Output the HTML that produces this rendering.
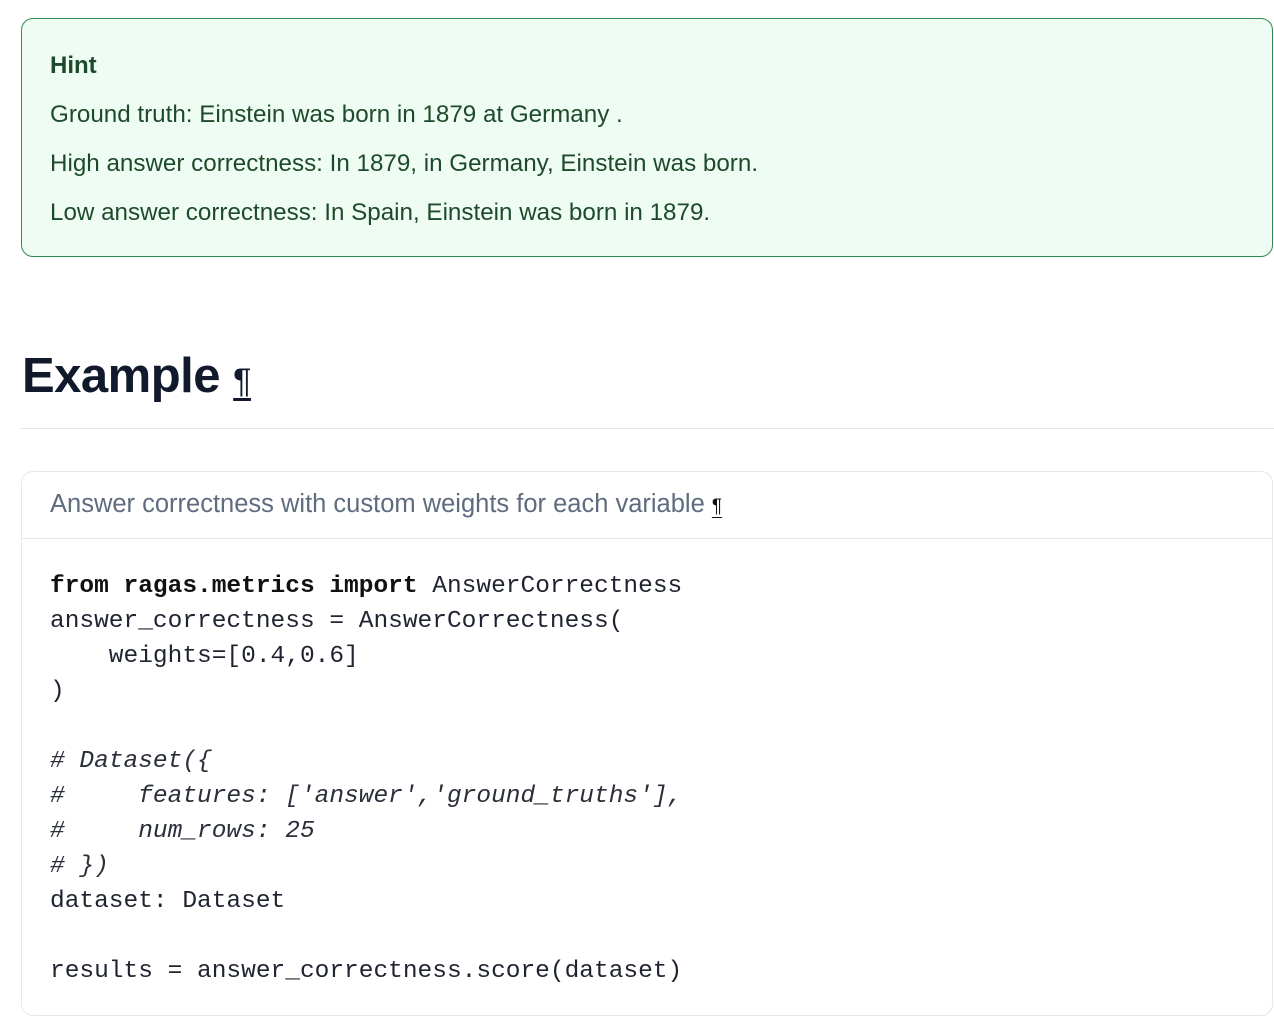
<!DOCTYPE html>
<html><head><style>
body{margin:0;background:#fff;width:1274px;height:1022px;overflow:hidden;font-family:"Liberation Sans",sans-serif}
.hint{position:absolute;left:21px;top:18px;width:1250px;height:237px;border:1px solid #2e8b4f;border-radius:12px;background:#effcf3;color:#1d4a2c}
.hint div{position:absolute;left:28px;font-size:24.2px;white-space:nowrap}
h1{position:absolute;left:22px;top:348px;margin:0;font-size:49px;font-weight:700;color:#111a2c;letter-spacing:-0.5px}
h1 span{font-size:34px;text-decoration:underline;text-underline-offset:6px;font-weight:400}
.rule{position:absolute;left:21px;top:428px;width:1253px;height:1px;background:#e5e7eb}
.code{position:absolute;left:21px;top:471px;width:1250px;height:543px;border:1px solid #e5e7eb;border-radius:12px}
.cap{position:absolute;left:28px;top:18px;font-size:25.5px;color:#5f6b7e;white-space:nowrap}
.cap span{font-size:19px;color:#111;text-decoration:underline;text-underline-offset:5px}
.sep{position:absolute;left:0;top:66px;width:100%;height:1px;background:#e5e7eb}
pre{position:absolute;left:28px;top:97px;margin:0;font-family:"Liberation Mono",monospace;font-size:24.5px;line-height:35px;color:#1f2430}
b{font-weight:700;color:#111}
i{color:#2a2f3a}
</style></head><body>
<div class="hint">
<div style="top:33px;font-weight:700;font-size:24px">Hint</div>
<div style="top:82px">Ground truth: Einstein was born in 1879 at Germany .</div>
<div style="top:131px">High answer correctness: In 1879, in Germany, Einstein was born.</div>
<div style="top:180px">Low answer correctness: In Spain, Einstein was born in 1879.</div>
</div>
<h1>Example <span>¶</span></h1>
<div class="rule"></div>
<div class="code">
<div class="cap">Answer correctness with custom weights for each variable <span>¶</span></div>
<div class="sep"></div>
<pre><b>from</b> <b>ragas.metrics</b> <b>import</b> AnswerCorrectness
answer_correctness = AnswerCorrectness(
    weights=[0.4,0.6]
)

<i># Dataset({
#     features: ['answer','ground_truths'],
#     num_rows: 25
# })</i>
dataset: Dataset

results = answer_correctness.score(dataset)</pre>
</div>
</body></html>
